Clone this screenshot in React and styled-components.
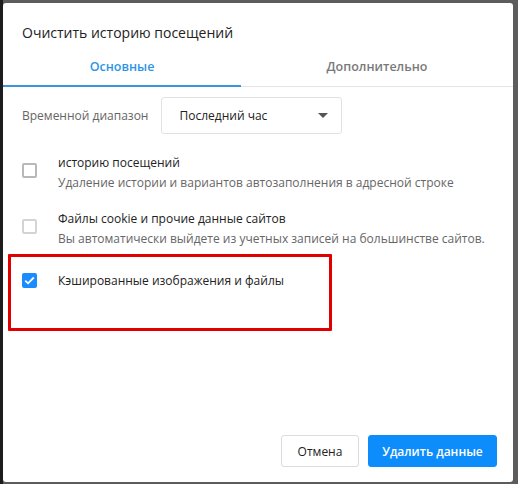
import React from 'react'
import styled, { createGlobalStyle } from 'styled-components'

const GlobalStyle = createGlobalStyle`
  html, body {
    margin: 0;
    padding: 0;
    background: #5c5c5c;
  }
  body {
    font-family: "Open Sans", "Noto Sans", sans-serif;
    -webkit-font-smoothing: antialiased;
  }
`;

const Backdrop = styled.div`
  width: 518px;
  height: 484px;
  padding: 3px 5px 2px 3px;
  box-sizing: border-box;
  background: linear-gradient(to right, #1c1c1c 0, #1c1c1c 3px, #5c5c5c 3px);
`;

const Dialog = styled.div`
  position: relative;
  width: 100%;
  height: 100%;
  background: #fff;
  border-radius: 3px;
  display: flex;
  flex-direction: column;
  box-sizing: border-box;
`;

const Title = styled.div`
  font-size: 14px;
  color: #222;
  padding: 20px 0 0 19px;
  height: 30px;
  line-height: 20px;
  white-space: nowrap;
`;

const Tabs = styled.div`
  display: flex;
  border-bottom: 1px solid #e4e4e4;
`;

const Tab = styled.div`
  width: ${p => p.$w}px;
  flex: ${p => (p.$grow ? 1 : 'none')};
  text-align: center;
  font-size: 12.5px;
  font-weight: 600;
  color: ${p => (p.$active ? '#2d95e6' : '#7a7a7a')};
  padding: 4px 0 8px;
  line-height: 20px;
  border-bottom: 2px solid ${p => (p.$active ? '#3a97dc' : 'transparent')};
  margin-bottom: -1px;
`;

const Body = styled.div`
  padding: 10px 19px 0 19px;
  display: flex;
  flex-direction: column;
  flex: 1;
`;

const RangeRow = styled.div`
  display: flex;
  align-items: center;
  gap: 13px;
`;

const Label = styled.span`
  font-size: 12px;
  color: #666;
  white-space: nowrap;
`;

const Select = styled.div`
  width: 181px;
  height: 37px;
  box-sizing: border-box;
  border: 1px solid #e2e2e2;
  border-radius: 3px;
  display: flex;
  align-items: center;
  justify-content: space-between;
  padding: 0 13px 0 17px;
  font-size: 12px;
  color: #222;
`;

const Arrow = styled.span`
  width: 0;
  height: 0;
  border-left: 5px solid transparent;
  border-right: 5px solid transparent;
  border-top: 5px solid #555;
`;

const Options = styled.div`
  display: flex;
  flex-direction: column;
  margin-top: 19px;
  gap: 16px;
`;

const Option = styled.div`
  display: flex;
  align-items: flex-start;
  gap: 21px;
  min-height: 40px;
  margin-top: ${p => (p.$single ? 6 : 0)}px;
`;

const Box = styled.span`
  flex: none;
  width: 15px;
  height: 15px;
  box-sizing: border-box;
  margin-top: ${p => (p.$single ? 2 : 10)}px;
  border-radius: 2px;
  border: 2px solid ${p => (p.$light ? '#d4d4d4' : '#b8b8b8')};
  background: ${p => (p.$checked ? '#1a8cff' : '#fff')};
  ${p => p.$checked && 'border: none;'}
  display: flex;
  align-items: center;
  justify-content: center;
`;

const OptionText = styled.div`
  display: flex;
  flex-direction: column;
  line-height: 20px;
  white-space: nowrap;
`;

const OptionTitle = styled.span`
  font-size: 12px;
  color: #222;
`;

const OptionDesc = styled.span`
  font-size: 12px;
  color: #666;
`;

const Highlight = styled.div`
  position: absolute;
  left: 5px;
  top: 251px;
  width: 324px;
  height: 77px;
  box-sizing: border-box;
  border: 3px solid #e00000;
  border-radius: 1px;
  pointer-events: none;
`;

const Footer = styled.div`
  display: flex;
  justify-content: flex-end;
  gap: 9px;
  padding: 0 16px 15px 0;
`;

const Button = styled.button`
  width: ${p => (p.$primary ? 129 : 78)}px;
  height: 32px;
  padding: 0;
  border-radius: 3px;
  font-family: inherit;
  font-size: 12px;
  font-weight: ${p => (p.$primary ? 600 : 400)};
  color: ${p => (p.$primary ? '#fff' : '#222')};
  background: ${p => (p.$primary ? '#0d8cfb' : '#fff')};
  border: 1px solid ${p => (p.$primary ? '#0d8cfb' : '#dcdcdc')};
`;

const Check = () => (
  <svg width="11" height="9" viewBox="0 0 11 9">
    <path d="M1.2 4.6 L4.1 7.3 L9.8 1.5" fill="none" stroke="#fff" strokeWidth="1.8" />
  </svg>
);

export default function App() {
  return (
    <>
      <GlobalStyle />
      <Backdrop>
        <Dialog>
          <Title>Очистить историю посещений</Title>
          <Tabs>
            <Tab $active $w={238}>Основные</Tab>
            <Tab $grow>Дополнительно</Tab>
          </Tabs>
          <Body>
            <RangeRow>
              <Label>Временной диапазон</Label>
              <Select>
                Последний час
                <Arrow />
              </Select>
            </RangeRow>
            <Options>
              <Option>
                <Box />
                <OptionText>
                  <OptionTitle>историю посещений</OptionTitle>
                  <OptionDesc>Удаление истории и вариантов автозаполнения в адресной строке</OptionDesc>
                </OptionText>
              </Option>
              <Option>
                <Box $light />
                <OptionText>
                  <OptionTitle>Файлы cookie и прочие данные сайтов</OptionTitle>
                  <OptionDesc>Вы автоматически выйдете из учетных записей на большинстве сайтов.</OptionDesc>
                </OptionText>
              </Option>
              <Option $single>
                <Box $checked $single><Check /></Box>
                <OptionText>
                  <OptionTitle>Кэшированные изображения и файлы</OptionTitle>
                </OptionText>
              </Option>
            </Options>
          </Body>
          <Footer>
            <Button>Отмена</Button>
            <Button $primary>Удалить данные</Button>
          </Footer>
          <Highlight />
        </Dialog>
      </Backdrop>
    </>
  )
}
